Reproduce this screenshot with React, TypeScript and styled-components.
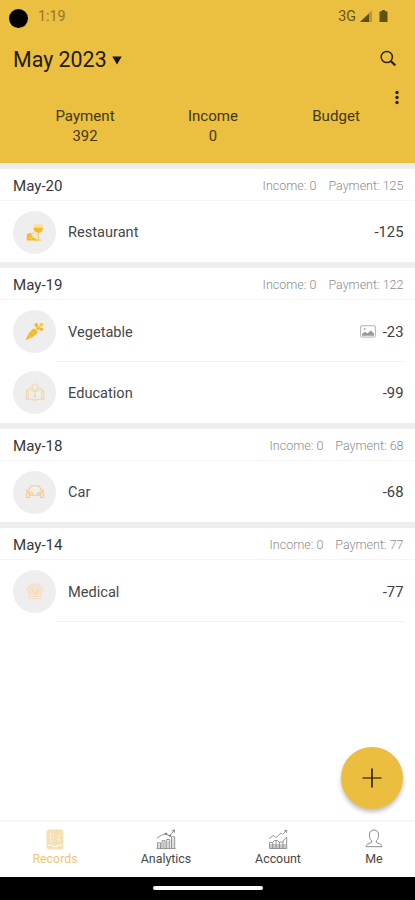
import React from 'react';
import styled, { createGlobalStyle } from 'styled-components';

const GlobalStyle = createGlobalStyle`
  * { box-sizing: border-box; }
  body { margin: 0; background: #fff; font-family: Roboto, sans-serif; }
`;

const Screen = styled.div`
  position: relative;
  display: flex;
  flex-direction: column;
  width: 415px;
  height: 900px;
  overflow: hidden;
  background: #fff;
  color: #383838;
`;

const Header = styled.header`
  flex: none;
  height: 163px;
  background: #ebbf40;
`;

const StatusBar = styled.div`
  display: flex;
  align-items: center;
  height: 32px;
  padding: 0 21px 0 9px;
  color: #6b5514;
`;

const Camera = styled.span`
  width: 19px;
  height: 19px;
  margin-top: 5px;
  border-radius: 50%;
  background: #000;
`;

const Clock = styled.span`
  margin-left: 10px;
  font-size: 14.3px;
  color: #94762a;
`;

const Signals = styled.div`
  display: flex;
  align-items: center;
  margin-left: auto;
  font-size: 14.3px;
`;

const TitleRow = styled.div`
  display: flex;
  align-items: center;
  justify-content: space-between;
  height: 54px;
  padding: 0 18px 0 13px;
`;

const Month = styled.h1`
  display: flex;
  align-items: center;
  gap: 5px;
  margin: 0;
  padding-top: 1px;
  font-size: 21.4px;
  font-weight: 400;
  color: #221b05;
`;

const MenuRow = styled.div`
  display: flex;
  justify-content: flex-end;
  height: 20px;
  padding: 4px 15px 0 0;
`;

const Totals = styled.div`
  display: grid;
  grid-template-columns: 128px 128px 118px;
  padding-left: 21px;
`;

const Total = styled.div`
  display: flex;
  flex-direction: column;
  align-items: center;
  font-size: 15.1px;
  line-height: 20px;
  color: #44370e;
`;

const TotalValue = styled.span`
  font-size: 14.8px;
`;

const Records = styled.main`
  flex: 1;
  min-height: 0;
`;

const Day = styled.section`
  border-top: 6px solid #eeeeee;
`;

const DayHeader = styled.div`
  display: flex;
  align-items: center;
  justify-content: space-between;
  height: 32px;
  padding: 2px 11.5px 0 13px;
  border-bottom: 1px solid #f5f5f5;
`;

const DayName = styled.span`
  font-size: 15.1px;
`;

const DaySums = styled.div`
  display: flex;
  gap: 12px;
  font-size: 12.5px;
  font-weight: 300;
  color: #8c8c8c;
`;

const Entry = styled.div`
  display: flex;
  height: 61.35px;
  padding: 0 11.5px 0 13px;
`;

const Badge = styled.span`
  display: grid;
  place-items: center;
  width: 43px;
  height: 43px;
  margin-top: 9.5px;
  border-radius: 50%;
  background: #eeeeee;
`;

const EntryBody = styled.div<{ $ruled?: boolean }>`
  display: flex;
  align-items: center;
  flex: 1;
  padding-left: 12px;
  padding-top: 2.5px;
  border-bottom: 1px solid ${(p) => (p.$ruled ? '#f2f2f2' : 'transparent')};
`;

const EntryName = styled.span`
  flex: 1;
  font-size: 14.6px;
  color: #484848;
`;

const Amount = styled.span`
  margin-left: 7px;
  font-size: 14.8px;
  color: #404040;
`;

const Nav = styled.nav`
  flex: none;
  display: grid;
  grid-template-columns: 110px 112px 112px 80px;
  height: 57px;
  border-top: 2px solid #f5f5f5;
`;

const NavItem = styled.a<{ $active?: boolean }>`
  display: flex;
  flex-direction: column;
  align-items: center;
  gap: 1px;
  padding-top: 7px;
  font-size: 12.4px;
  line-height: 16px;
  color: ${(p) => (p.$active ? '#f0c671' : '#484848')};
`;

const SystemBar = styled.div`
  flex: none;
  display: flex;
  justify-content: center;
  height: 23px;
  padding-top: 9px;
  background: #000;
`;

const HomeHandle = styled.span`
  width: 110px;
  height: 4px;
  border-radius: 2px;
  background: #fff;
`;

const AddButton = styled.button`
  position: absolute;
  right: 12px;
  bottom: 91px;
  display: grid;
  place-items: center;
  width: 62px;
  height: 62px;
  padding: 0;
  border: 0;
  border-radius: 50%;
  background: #ebbe40;
  box-shadow: 0 3px 4px rgba(0, 0, 0, 0.25);
`;

const RestaurantIcon = () => (
  <svg width="18" height="19" viewBox="0 0 18 19" fill="none">
    <path d="M7.8 1.2h8.8l.3 3.8c0 3-1.9 4.8-4.5 4.8S7.6 8 7.6 5z" fill="#f8dfa4" />
    <path d="M7.6 4.7h9.3c0 3.2-1.8 5.1-4.6 5.1S7.6 7.9 7.6 4.7z" fill="#f5bb24" />
    <path d="M12.3 9.5v7.3M9.4 17.2h6" stroke="#f5c75a" strokeWidth="1.2" />
    <path d="M.8 11.2l3.3-1.4 7.3 7.6H.8z" fill="#f5bb24" />
    <path d="M5 11.2c2-2.3 4.8-1 5.3 2.2" stroke="#f6c95e" />
    <path d="M3.8 14.2l2 2M5.8 12.8l2 2.2" stroke="#fdedc4" />
  </svg>
);

const CarrotIcon = () => (
  <svg width="19" height="19" viewBox="0 0 19 19" fill="none">
    <path d="M.6 18.2C2 13.6 5.2 8.6 8 7c2.3-1 5.2 1.6 4 4.1C10.6 13.8 5.3 16.4.6 18.2z" fill="#f6b928" />
    <path d="M12 7.2l5-.2M12 7.2L11.6 2M12 7.2l4.4-4.4" stroke="#f6b928" strokeWidth="1.3" />
    <circle cx="11.3" cy="3" r="1.9" fill="#f6b928" />
    <circle cx="16.4" cy="2.8" r="1.8" fill="#f8c649" />
    <circle cx="16.5" cy="7.3" r="1.8" fill="#f6b928" />
    <path d="M6.2 9.4l1.8 1.3M8.8 11.5l1.2 1M4.4 13.6l1.4 1" stroke="#fbd67c" strokeWidth=".8" />
  </svg>
);

const EducationIcon = () => (
  <svg width="20" height="19" viewBox="0 0 20 19" fill="none" stroke="#f5d3a1" strokeWidth="1">
    <circle cx="10" cy="4" r="3.1" />
    <path d="M5.8 7.2L10 9l4.2-1.8M10 9v8.3M7 16.3l3 1.2 3-1.2M8.5 13h3" />
    <path d="M6.2 5.2L3.2 6v1.2L1.2 7.6v9.1l2-.5 3.8.1M13.8 5.2l3 .8v1.2l2 .4v9.1l-2-.5-3.8.1M3.2 7.2v9M16.8 7.2v9" />
  </svg>
);

const CarIcon = () => (
  <svg width="20" height="14" viewBox="0 0 20 14" fill="none" stroke="#f5c986" strokeWidth="1.1">
    <path d="M3.4 5.5l2-3.8C5.8 1 6.3.8 7 .8h6c.7 0 1.2.2 1.6.9l2 3.8M3 5.8L1 4.8M17 5.8l2-1" />
    <path d="M2.7 6L1.7 8v4.5h2.9V10.2h10.8v2.3h2.9V8l-1-2" />
    <circle cx="4.8" cy="8" r="1.3" />
    <circle cx="15.2" cy="8" r="1.3" />
    <path d="M7.5 7.6v2.4M12.5 7.6v2.4" />
  </svg>
);

const MedicalIcon = () => (
  <svg width="18" height="18" viewBox="0 0 18 18" fill="none" stroke="#f6dcc0" strokeWidth="1">
    <path d="M1.2 8.5C2 4.3 4.8 2 9 2s7 2.3 7.8 6.5L14.6 11 9 14 3.4 11z" fill="#f5e4d4" />
    <path d="M3 9.5v5h12v-5M1.5 16.5h15" />
    <path d="M5 6.5l4.2 5 4-4.2" stroke="#f5d0a8" />
  </svg>
);

const PictureIcon = () => (
  <svg width="16" height="13" viewBox="0 0 16 13" fill="none">
    <rect x=".6" y=".7" width="14.8" height="11.4" rx="1.3" stroke="#aaa" strokeWidth=".9" />
    <circle cx="4.6" cy="4" r="1" fill="#aaa" />
    <path d="M2 10.8V9l3-2.2 2.3 1.6 3.6-3 3.1 3.4v2z" fill="#999" />
  </svg>
);

const RecordsIcon = () => (
  <svg width="18" height="21" viewBox="0 0 18 21" fill="none">
    <rect x=".5" y=".5" width="17" height="20" rx="3" fill="#f5e0b4" />
    <path d="M4.5 4v10M6 5h2.5M6 8.5h2.5M6 12h2.5M11 8l3-2.5M11 10.7h3M12.5 9v5" stroke="#fdf3da" strokeWidth=".9" />
    <path d="M1.7 16.4h4.6l1 1.2h3.4l1-1.2h4.6" stroke="#fffaf0" strokeWidth="1.4" />
  </svg>
);

const AnalyticsIcon = () => (
  <svg width="20" height="21" viewBox="0 0 20 21" fill="none" stroke="#777" strokeWidth=".8">
    <path d="M1 9.2l4.2-3 4.5-1.4 4 2L18.5 1M15.7 1.9l2.8-1-.2 3" />
    <circle cx="10" cy="4.8" r=".8" fill="#555" />
    <circle cx="14" cy="6.7" r=".8" fill="#555" />
    <path d="M1.5 19.5v-5.7h3v5.7M6 19.5v-7.8h3v7.8M10.7 19.5v-9h3v9M15.5 19.5V7.8h3.2v11.7M.6 19.6h19" />
    <path d="M3 15v4M7.5 13v6M12.2 12v7M17 9.5v9.5" opacity=".6" />
  </svg>
);

const AccountIcon = () => (
  <svg width="20" height="21" viewBox="0 0 20 21" fill="none" stroke="#7d7d7d" strokeWidth=".8">
    <path d="M1.2 9.7l4-3.2 3.2 1.8L13 4l1.5 1.5 4.2-4.2M16 1.7l2.8-.5-.3 2.8" />
    <path d="M1.5 13.5h3l2-2h3l1.5 1.7h3L18.7 8v11.5H1.5zM4.7 13.5v6M8 11.5v8M11.4 13v6.5M15 12v7.5" />
    <path d="M1.5 16h17M1.5 18h17" />
  </svg>
);

const PersonIcon = () => (
  <svg width="18" height="21" viewBox="0 0 18 21" fill="none" stroke="#808080" strokeWidth=".9">
    <path d="M6.7 11.7C5.2 10.5 4.4 8.5 4.4 6c0-3 1.7-5 4.6-5s4.6 2 4.6 5c0 2.5-.8 4.5-2.3 5.7v1.7l4 1.8c1 .4 1.5 1.2 1.5 2.5H1.2c0-1.3.5-2.1 1.5-2.5l4-1.8z" />
  </svg>
);

const days = [
  { date: 'May-20', payment: 125, entries: [{ name: 'Restaurant', amount: -125, Icon: RestaurantIcon }] },
  {
    date: 'May-19',
    payment: 122,
    entries: [
      { name: 'Vegetable', amount: -23, Icon: CarrotIcon, picture: true, ruled: true },
      { name: 'Education', amount: -99, Icon: EducationIcon },
    ],
  },
  { date: 'May-18', payment: 68, entries: [{ name: 'Car', amount: -68, Icon: CarIcon }] },
  { date: 'May-14', payment: 77, entries: [{ name: 'Medical', amount: -77, Icon: MedicalIcon, ruled: true }] },
] as {
  date: string;
  payment: number;
  entries: { name: string; amount: number; Icon: React.FC; picture?: boolean; ruled?: boolean }[];
}[];

const tabs = [
  { label: 'Records', Icon: RecordsIcon, active: true },
  { label: 'Analytics', Icon: AnalyticsIcon },
  { label: 'Account', Icon: AccountIcon },
  { label: 'Me', Icon: PersonIcon },
];

export default function App() {
  return (
    <>
      <GlobalStyle />
      <Screen>
        <Header>
          <StatusBar>
            <Camera />
            <Clock>1:19</Clock>
            <Signals>
              3G
              <svg width="38" height="14" viewBox="0 0 38 14" fill="#62500f">
                <path d="M4 13L16 1v12z" opacity=".35" />
                <path d="M4 13l9-8.5V13z" />
                <path d="M23.5 3.2q0-1 1-1H26V1h3v1.2h1.5q1 0 1 1V13h-8z" />
              </svg>
            </Signals>
          </StatusBar>
          <TitleRow>
            <Month>
              May 2023
              <svg width="10" height="10" viewBox="0 0 10 10">
                <path d="M.3 1.4h9.4L5 9.5z" fill="#171303" />
              </svg>
            </Month>
            <svg width="18" height="18" viewBox="0 0 18 18" fill="none" stroke="#2e2508">
              <circle cx="7.8" cy="7" r="5.6" strokeWidth="1.5" />
              <path d="M11.7 11l4.6 4.4" strokeWidth="2.2" />
            </svg>
          </TitleRow>
          <MenuRow>
            <svg width="6" height="15" viewBox="0 0 6 15" fill="#2a2107">
              <circle cx="3" cy="2.5" r="1.7" />
              <circle cx="3" cy="7.5" r="1.7" />
              <circle cx="3" cy="12.5" r="1.7" />
            </svg>
          </MenuRow>
          <Totals>
            <Total>Payment<TotalValue>392</TotalValue></Total>
            <Total>Income<TotalValue>0</TotalValue></Total>
            <Total>Budget</Total>
          </Totals>
        </Header>
        <Records>
          {days.map((day) => (
            <Day key={day.date}>
              <DayHeader>
                <DayName>{day.date}</DayName>
                <DaySums>
                  <span>Income: 0</span>
                  <span>Payment: {day.payment}</span>
                </DaySums>
              </DayHeader>
              {day.entries.map(({ name, amount, Icon, picture, ruled }) => (
                <Entry key={name}>
                  <Badge><Icon /></Badge>
                  <EntryBody $ruled={ruled}>
                    <EntryName>{name}</EntryName>
                    {picture && <PictureIcon />}
                    <Amount>{amount}</Amount>
                  </EntryBody>
                </Entry>
              ))}
            </Day>
          ))}
        </Records>
        <Nav>
          {tabs.map(({ label, Icon, active }) => (
            <NavItem key={label} $active={active}>
              <Icon />
              {label}
            </NavItem>
          ))}
        </Nav>
        <SystemBar><HomeHandle /></SystemBar>
        <AddButton aria-label="Add record">
          <svg width="20" height="20" viewBox="0 0 20 20" fill="none">
            <path d="M.5 10h19" stroke="#54430f" strokeWidth="1.5" />
            <path d="M10 .5v19" stroke="#171203" strokeWidth="1.5" />
          </svg>
        </AddButton>
      </Screen>
    </>
  );
}
